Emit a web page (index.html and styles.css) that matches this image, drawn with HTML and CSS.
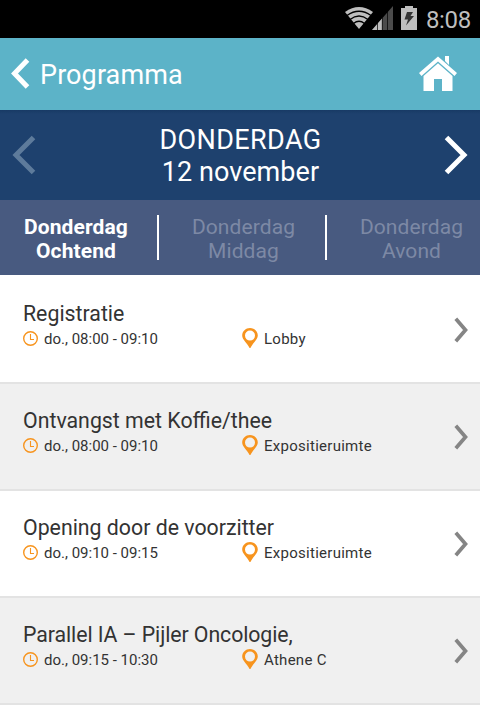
FILE: index.html
```html
<!DOCTYPE html>
<html lang="nl">
<head>
<meta charset="utf-8">
<title>Programma</title>
<link rel="stylesheet" href="styles.css">
</head>
<body>
<svg class="defs" width="0" height="0" aria-hidden="true">
  <symbol id="clock" viewBox="0 0 16 16"><g fill="none" stroke="#f7941e"><circle cx="8.500" cy="7.500" r="6.800" stroke-width="1.400"/><path d="M8.500 3V8.500H12" stroke-width="1.100"/></g></symbol>
  <symbol id="pin" viewBox="0 0 16 20"><path fill="#f7941e" fill-rule="evenodd" d="M8 0C3.700 0 .2 3.300 .2 7.500C.2 11.500 4.800 14.600 7.600 20H8.400C11.200 14.600 15.800 11.500 15.800 7.500C15.800 3.300 12.300 0 8 0ZM8 2.600A5 5 0 1 1 8 12.600A5 5 0 1 1 8 2.600Z"/></symbol>
  <symbol id="next" viewBox="0 0 14 26"><path fill="none" stroke="#858585" stroke-width="3.700" d="M1.800 1.700L11.500 13L1.800 24.300"/></symbol>
</svg>
<div class="status">
  <svg class="wifi" width="28" height="22" viewBox="0 0 28 22"><path fill="#bebebe" d="M0 5Q14 -5 28 5L14 22Z"/><path fill="none" stroke="#000" stroke-width="1.300" d="M2 8.500Q14 0 26 8.500M5 12.500Q14 5.500 23 12.500M8.500 16.500Q14 12 19.500 16.500"/></svg>
  <svg class="signal" width="21" height="24" viewBox="0 0 21 24"><path fill="#4b4b4b" d="M0 24L21 0V24Z"/><path fill="#bebebe" d="M0 24L10 12.600V24Z"/><path stroke="#000" stroke-width=".7" d="M5.500 17V24M10.300 12V24M15.500 6V24"/></svg>
  <svg class="battery" width="16" height="24" viewBox="0 0 16 24"><path fill="#bebebe" d="M4 0H12V2H16V24H0V2H4Z"/><path fill="#333" d="M6 6H12L9.500 10H13L5 19.500L7 13.500H3.500Z"/></svg>
  <span class="time">8:08</span>
</div>
<header class="bar">
  <svg width="20" height="32" viewBox="0 0 20 32"><path fill="none" stroke="#fff" stroke-width="5" d="M17.500 2L4.500 15.500L17.500 29"/></svg>
  <h1>Programma</h1>
  <svg class="home" width="38" height="36" viewBox="0 0 38 36"><g fill="#fff"><path d="M26 0H30V9L26 5Z"/><path d="M19 .5L38 17L35.500 20L19 5.500L2.500 20L0 17Z"/><path d="M19 7.200L33.500 20V35H23V23H15V35H4.500V20Z"/></g></svg>
</header>
<section class="day">
  <svg width="24" height="40" viewBox="0 0 24 40"><path fill="none" stroke="#5e7b9b" stroke-width="5" d="M21.500 2.500L4 20L21.500 37.500"/></svg>
  <div class="date"><span class="weekday">DONDERDAG</span><br><span class="daynum">12 november</span></div>
  <svg width="24" height="40" viewBox="0 0 24 40"><path fill="none" stroke="#fff" stroke-width="5" d="M2.500 2.500L20 20L2.500 37.500"/></svg>
</section>
<nav class="tabs">
  <div class="tab active">Donderdag<br>Ochtend</div>
  <div class="tab">Donderdag<br>Middag</div>
  <div class="tab">Donderdag<br>Avond</div>
</nav>
<main>
  <article class="row"><div class="info"><h2>Registratie</h2><div class="meta"><svg class="clock"><use href="#clock"/></svg><span class="when">do., 08:00 - 09:10</span><svg class="pin"><use href="#pin"/></svg><span class="place">Lobby</span></div></div><svg class="next"><use href="#next"/></svg></article>
  <article class="row"><div class="info"><h2>Ontvangst met Koffie/thee</h2><div class="meta"><svg class="clock"><use href="#clock"/></svg><span class="when">do., 08:00 - 09:10</span><svg class="pin"><use href="#pin"/></svg><span class="place">Expositieruimte</span></div></div><svg class="next"><use href="#next"/></svg></article>
  <article class="row"><div class="info"><h2>Opening door de voorzitter</h2><div class="meta"><svg class="clock"><use href="#clock"/></svg><span class="when">do., 09:10 - 09:15</span><svg class="pin"><use href="#pin"/></svg><span class="place">Expositieruimte</span></div></div><svg class="next"><use href="#next"/></svg></article>
  <article class="row"><div class="info"><h2 class="tight">Parallel IA – Pijler Oncologie,</h2><div class="meta"><svg class="clock"><use href="#clock"/></svg><span class="when">do., 09:15 - 10:30</span><svg class="pin"><use href="#pin"/></svg><span class="place">Athene C</span></div></div><svg class="next"><use href="#next"/></svg></article>
</main>
</body>
</html>
```
FILE: styles.css
```css
* { box-sizing: border-box; }
body { margin: 0; height: 728px; overflow: hidden; background: #fff; font-family: Roboto, sans-serif; color: #333; }
h1, h2 { margin: 0; font-weight: 400; }
svg { display: block; flex: none; }
.defs { position: absolute; }
.status { height: 38px; background: #000; display: flex; align-items: flex-start; justify-content: flex-end; padding: 6px 9px 0 0; }
.wifi { margin: 1px -1px 0 0; }
.signal { margin-right: 8px; }
.battery { margin-right: 9px; }
.time { color: #bebebe; font-size: 24px; line-height: 28px; letter-spacing: -.3px; }
.bar { height: 72px; background: #5cb3c8; display: flex; align-items: center; padding: 0 23px 0 10px; color: #fff; }
.bar h1 { flex: 1; margin-left: 10px; padding-top: 2px; font-size: 27px; line-height: 32px; letter-spacing: .1px; }
.home { margin-top: -1px; }
.day { height: 90px; background: linear-gradient(#183a65, #1e416e 4px); display: flex; align-items: center; justify-content: space-between; padding: 0 12px; color: #fff; }
.date { text-align: center; padding: 2px 0 0 1px; font-size: 27px; line-height: 32px; }
.weekday { letter-spacing: .4px; }
.daynum { letter-spacing: .05px; }
.tabs { height: 75px; background: #485a80; display: flex; }
.tab { position: relative; flex: none; width: 168px; padding: 15px 0 0 1px; text-align: center; font-size: 21px; line-height: 24px; letter-spacing: .1px; color: #7d89a5; }
.tab:first-child { width: 159px; padding: 15px 7px 0 0; }
.tab:not(:last-child)::after { content: ""; position: absolute; right: 0; top: 15px; width: 2px; height: 45px; background: #fff; }
.tab.active { color: #fff; font-weight: 700; }
main { padding-top: 2px; }
.row { height: 107px; border-bottom: 2px solid #e3e3e3; display: flex; align-items: center; padding: 0 12px 0 22px; }
.row:nth-child(even) { background: #f0f0f0; }
.info { flex: 1; padding-bottom: 8px; }
.info h2 { margin-left: 1px; padding-bottom: 4px; font-size: 21.3px; line-height: 24px; white-space: nowrap; }
.info h2.tight { letter-spacing: -.08px; }
.meta { display: flex; align-items: center; margin-top: -1px; font-size: 15px; line-height: 20px; }
.clock { width: 16px; height: 16px; }
.when { width: 198px; margin-left: 6px; }
.place { letter-spacing: .27px; }
.pin { width: 16px; height: 20px; margin: -2px 6px 0 0; }
.next { width: 14px; height: 26px; }
```
